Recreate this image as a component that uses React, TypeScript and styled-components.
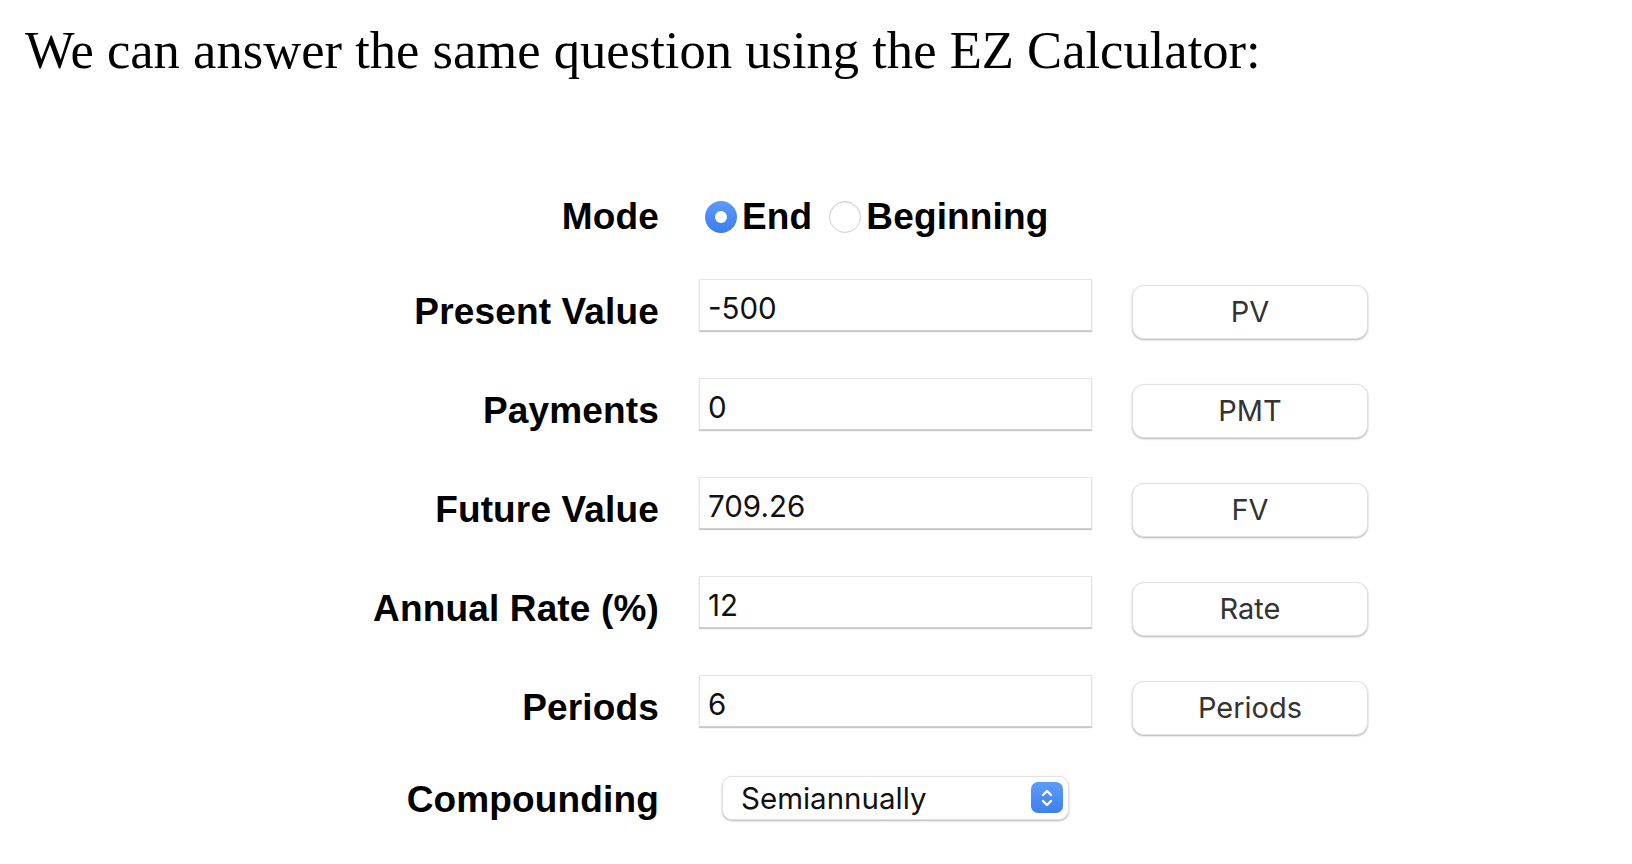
import React from "react";
import styled, { createGlobalStyle } from "styled-components";

const Global = createGlobalStyle`
  html, body { margin: 0; padding: 0; background: #ffffff; }
  body { font-family: "Liberation Sans", Arial, sans-serif; }
`;

const Page = styled.div`
  width: 1632px;
  height: 864px;
  overflow: hidden;
  padding-top: 20px;
  box-sizing: border-box;
`;

const Heading = styled.p`
  margin: 0;
  padding-left: 25px;
  font-family: "Liberation Serif", "Times New Roman", serif;
  font-size: 52.6px;
  line-height: 60px;
  color: #000;
`;

const Form = styled.div`
  display: grid;
  grid-template-columns: 659px 393px 236px;
  grid-template-rows: 90px repeat(5, 99px) 85px;
  column-gap: 40px;
  align-items: center;
  margin-top: 92px;
`;

const Label = styled.div`
  justify-self: end;
  font-family: "Liberation Sans", Arial, sans-serif;
  font-weight: 700;
  font-size: 37px;
  letter-spacing: 0.15px;
  color: #000;
  white-space: nowrap;
`;

const RadioGroup = styled.div`
  grid-column: 2 / span 2;
  display: flex;
  align-items: center;
  padding-left: 6px;
`;

const RadioDot = styled.span<{ $checked?: boolean }>`
  width: 32px;
  height: 32px;
  border-radius: 50%;
  box-sizing: border-box;
  display: inline-flex;
  align-items: center;
  justify-content: center;
  flex: none;
  background: ${(p) => (p.$checked ? "linear-gradient(#5c9bf9, #3d7cf0)" : "#ffffff")};
  border: ${(p) => (p.$checked ? "none" : "1.5px solid #cfcfcf")};
  box-shadow: ${(p) => (p.$checked ? "none" : "inset 0 1px 2px rgba(0,0,0,0.08)")};
  &::after {
    content: "";
    display: ${(p) => (p.$checked ? "block" : "none")};
    width: 12px;
    height: 12px;
    border-radius: 50%;
    background: #fff;
  }
`;

const RadioText = styled.span<{ $gap: number; $after: number }>`
  font-family: "Liberation Sans", Arial, sans-serif;
  font-weight: 700;
  font-size: 37px;
  letter-spacing: 0.15px;
  color: #000;
  margin-left: ${(p) => p.$gap}px;
  margin-right: ${(p) => p.$after}px;
`;

const Field = styled.input`
  box-sizing: border-box;
  width: 393px;
  height: 52px;
  margin: 0 0 14px 0;
  padding: 7px 0 0 8px;
  border: 1px solid #e4e4e4;
  border-bottom: 1px solid #d0d0d0;
  box-shadow: 0 1px 1px rgba(0, 0, 0, 0.22);
  background: #fff;
  font-family: Inter, "Liberation Sans", Arial, sans-serif;
  font-size: 29.5px;
  color: #111;
  outline: none;
`;

const ActionButton = styled.button`
  box-sizing: border-box;
  width: 236px;
  height: 54px;
  border-radius: 12px;
  border: 1px solid #e2e2e2;
  background: #fff;
  box-shadow: 0 1px 2px rgba(0, 0, 0, 0.3);
  font-family: Inter, "Liberation Sans", Arial, sans-serif;
  font-size: 29px;
  color: #333;
  padding: 0;
  cursor: pointer;
`;

const SelectBox = styled.div`
  grid-column: 2;
  justify-self: center;
  box-sizing: border-box;
  width: 347px;
  height: 44px;
  margin-bottom: 4px;
  border-radius: 10px;
  border: 1px solid #e2e2e2;
  background: #fff;
  box-shadow: 0 1px 2px rgba(0, 0, 0, 0.3);
  display: flex;
  align-items: center;
  justify-content: space-between;
  padding: 0 5px 0 18px;
`;

const SelectText = styled.span`
  font-family: Inter, "Liberation Sans", Arial, sans-serif;
  font-size: 29.5px;
  color: #111;
`;

const Stepper = styled.span`
  width: 32px;
  height: 31px;
  border-radius: 7px;
  background: linear-gradient(#5e9cf8, #3e7ef0);
  display: inline-flex;
  align-items: center;
  justify-content: center;
`;

const rows = [
  { label: "Present Value", value: "-500", btn: "PV" },
  { label: "Payments", value: "0", btn: "PMT" },
  { label: "Future Value", value: "709.26", btn: "FV" },
  { label: "Annual Rate (%)", value: "12", btn: "Rate" },
  { label: "Periods", value: "6", btn: "Periods" },
];

export default function App() {
  return (
    <Page>
      <Global />
      <Heading>We can answer the same question using the EZ Calculator:</Heading>
      <Form>
        <Label>Mode</Label>
        <RadioGroup>
          <RadioDot $checked />
          <RadioText $gap={5} $after={17}>End</RadioText>
          <RadioDot />
          <RadioText $gap={5} $after={0}>Beginning</RadioText>
        </RadioGroup>
        {rows.map((r) => (
          <React.Fragment key={r.label}>
            <Label>{r.label}</Label>
            <Field defaultValue={r.value} />
            <ActionButton>{r.btn}</ActionButton>
          </React.Fragment>
        ))}
        <Label>Compounding</Label>
        <SelectBox>
          <SelectText>Semiannually</SelectText>
          <Stepper>
            <svg width="14" height="22" viewBox="0 0 14 22" fill="none">
              <path d="M3 8 L7 4 L11 8" stroke="#fff" strokeWidth="2.4" strokeLinecap="round" strokeLinejoin="round" />
              <path d="M3 14 L7 18 L11 14" stroke="#fff" strokeWidth="2.4" strokeLinecap="round" strokeLinejoin="round" />
            </svg>
          </Stepper>
        </SelectBox>
      </Form>
    </Page>
  );
}
